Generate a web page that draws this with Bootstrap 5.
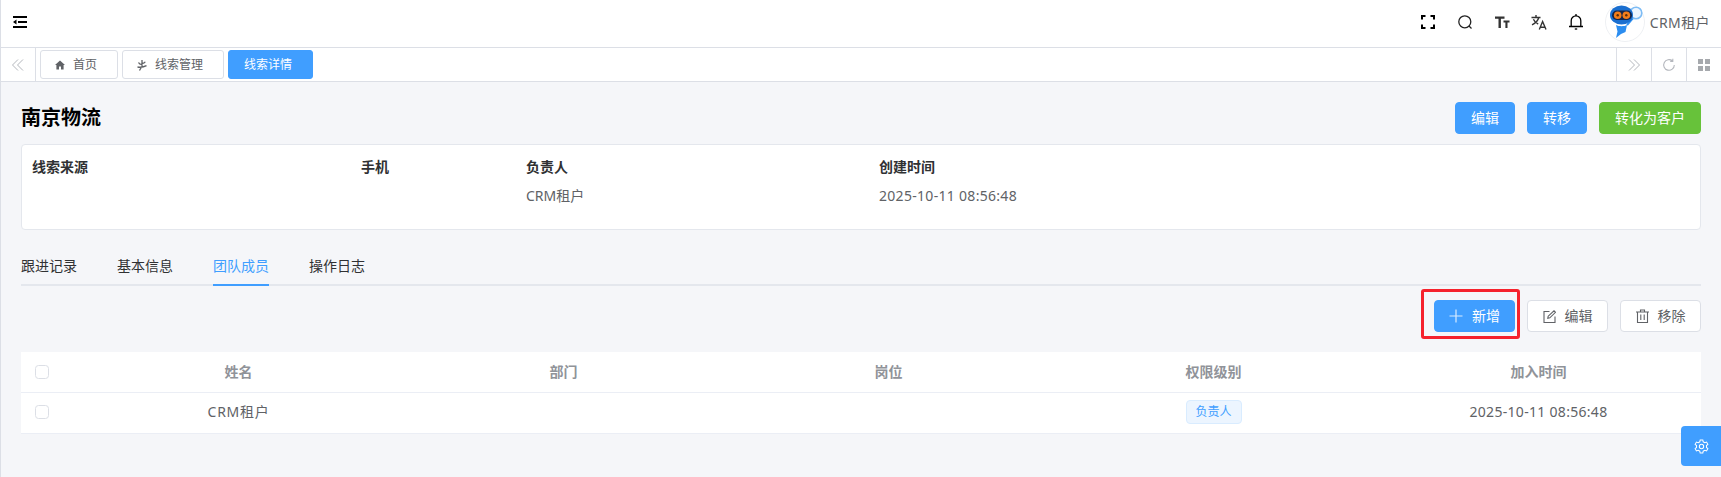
<!DOCTYPE html>
<html lang="zh-CN">
  <head>
    <meta charset="UTF-8" />
    <meta name="viewport" content="width=device-width, initial-scale=1.0" />
    <title>线索详情</title>
    <link
      href="https://cdn.jsdelivr.net/npm/bootstrap@5.3.0/dist/css/bootstrap.min.css"
      rel="stylesheet"
    />
    <style>
      body {
        font-family: "Noto Sans", "Noto Sans CJK SC", sans-serif;
        font-size: 14px;
        color: #303133;
        background-color: #f5f6f9;
        border-left: 1px solid #dcdfe6;
        height: 477px;
        overflow: hidden;
        position: relative;
      }
      .top-bar {
        height: 48px;
        background-color: #fff;
        border-bottom: 1px solid #dcdfe6;
        padding: 0 11px 3px 12px;
      }
      .top-icon {
        width: 18px;
        height: 18px;
        display: block;
      }
      .top-icons {
        gap: 19px;
        margin-right: 20px;
      }
      .robot-img {
        width: 40px;
        height: 40px;
        display: block;
      }
      .user-name {
        color: #606266;
        margin-left: 5px;
        letter-spacing: 0.4px;
      }
      .tab-strip {
        height: 34px;
        background-color: #fff;
        border-bottom: 1px solid #dcdfe6;
      }
      .strip-side {
        width: 35px;
        height: 33px;
        border-right: 1px solid #dcdfe6;
      }
      .strip-right {
        border-right: 0;
        border-left: 1px solid #dcdfe6;
      }
      .page-tabs {
        gap: 4px;
        margin-left: 4px;
      }
      .page-tab {
        height: 29px;
        padding: 0 20px 0 14px;
        gap: 8px;
        font-size: 12px;
        color: #606266;
        background-color: #fff;
        border: 1px solid #dcdfe6;
        border-radius: 3px;
      }
      .page-tab-on {
        padding-left: 15px;
        background-color: #409eff;
        border-color: #409eff;
        color: #fff;
      }
      .main-area {
        padding: 20px 20px 0;
      }
      .lead-title {
        font-size: 20px;
        font-weight: 700;
        color: #000;
        margin: 0;
      }
      .act-btn {
        height: 32px;
        padding: 0;
        font-size: 14px;
        border-radius: 4px;
        line-height: 1;
      }
      .act-60 {
        width: 60px;
      }
      .act-102 {
        width: 102px;
      }
      .act-81 {
        width: 81px;
        gap: 9px;
      }
      .act-blue,
      .act-blue:hover {
        background-color: #409eff;
        border-color: #409eff;
        color: #fff;
      }
      .act-green,
      .act-green:hover {
        background-color: #67c23a;
        border-color: #67c23a;
        color: #fff;
      }
      .act-plain,
      .act-plain:hover {
        background-color: #fff;
        border-color: #dcdfe6;
        color: #606266;
      }
      .title-row {
        gap: 12px;
        margin-bottom: 10px;
      }
      .info-box {
        height: 86px;
        background-color: #fff;
        border: 1px solid #e4e7ed;
        border-radius: 4px;
        padding: 12px 10px 0;
        display: grid;
        grid-template-columns: 329px 165px 353px 1fr;
        grid-template-rows: 20px 20px;
        row-gap: 9px;
        line-height: 20px;
      }
      .info-label {
        font-weight: 700;
      }
      .info-value {
        color: #606266;
      }
      .detail-tabs {
        margin-top: 16px;
        gap: 40px;
        border-bottom: 2px solid #e4e7ed;
        height: 40px;
      }
      .detail-tabs .nav-link {
        padding: 10px 0 0;
        height: 40px;
        line-height: 20px;
        color: #303133;
        border-bottom: 2px solid transparent;
      }
      .detail-tabs .nav-link.active {
        color: #409eff;
        border-bottom-color: #409eff;
      }
      .tool-row {
        margin-top: 14px;
        gap: 12px;
      }
      .red-mark {
        position: absolute;
        top: -11px;
        bottom: -7px;
        left: -13px;
        right: -5px;
        border: 3px solid #f5222d;
        border-radius: 3px;
        pointer-events: none;
      }
      .member-table {
        margin: 20px 0 0;
        table-layout: fixed;
        background-color: #fff;
      }
      .member-table th,
      .member-table td {
        padding: 0;
        text-align: center;
        vertical-align: middle;
        border-bottom: 1px solid #ebeef5;
        line-height: 20px;
      }
      .member-table th {
        height: 40px;
        color: #909399;
        font-weight: 700;
      }
      .member-table td {
        height: 41px;
        padding-bottom: 1px;
        color: #606266;
      }
      .check-col {
        width: 55px;
      }
      .member-table .check-col {
        padding-left: 14px;
        text-align: left;
      }
      .row-check {
        width: 14px;
        height: 14px;
        margin: 0;
        border: 1px solid #dcdfe6;
        border-radius: 2px;
        display: block;
      }
      .role-tag {
        display: inline-block;
        width: 56px;
        height: 24px;
        line-height: 22px;
        font-size: 12px;
        color: #409eff;
        background-color: #ecf5ff;
        border: 1px solid #d9ecff;
        border-radius: 4px;
      }
      .date-text {
        letter-spacing: 0.3px;
      }
      .member-table .name-text {
        letter-spacing: 0.7px;
      }
      .settings-btn {
        position: absolute;
        right: 0;
        top: 426px;
        width: 40px;
        height: 40px;
        background-color: #409eff;
        border-radius: 4px 0 0 4px;
      }
    </style>
  </head>
  <body>
    <header class="top-bar d-flex align-items-center justify-content-between">
      <svg width="14" height="12" viewBox="0 0 14 12" class="d-block">
        <path d="M0 1h14M5 6h9M0 11h14" stroke="#000" stroke-width="2" fill="none" />
        <path d="M0 6l3.500-2.400v4.800z" fill="#000" />
      </svg>
      <div class="d-flex align-items-center">
        <div class="top-icons d-flex align-items-center">
          <svg class="top-icon" viewBox="0 0 18 18" fill="none" stroke="#000" stroke-width="2">
            <path d="M3 6.500V3h3.500M11.500 3H15v3.500M15 11.500V15h-3.500M6.500 15H3v-3.500" />
          </svg>
          <svg class="top-icon" viewBox="0 0 18 18" fill="none" stroke="#222" stroke-width="1.300">
            <circle cx="8.800" cy="8.800" r="6" />
            <path d="M13 13l2.500 2.500" />
          </svg>
          <svg class="top-icon" viewBox="0 0 18 18" fill="#333">
            <path d="M2 3.500h9.500v2.200H7.900V15H5.500V5.700H2zM10.500 7.500H16.500v1.900h-2V15h-2.100V9.400h-1.900z" />
          </svg>
          <svg class="top-icon" viewBox="0 0 18 18" fill="none" stroke="#333" stroke-width="1.400">
            <path d="M1.500 4.500h9M6 2v2.500M8.800 4.500C8 7.500 5.500 10.200 2 11.800M3.400 6.300C4.400 8.600 6 10 8.200 11" />
            <path d="M9.300 16.500l3.300-8 3.400 8M10.500 14.200h4.300" />
          </svg>
          <svg class="top-icon" viewBox="0 0 18 18" fill="none" stroke="#000" stroke-width="1.300">
            <path d="M2 13.500h14M4.200 13.500V7.700a4.800 4.800 0 0 1 9.600 0v5.800" />
            <path d="M9 1v2" />
            <path d="M7.800 16h2.400" />
          </svg>
        </div>
        <svg class="robot-img" viewBox="0 0 40 40">
          <circle cx="20" cy="20" r="19.500" fill="#fff" stroke="#eef0f3" />
          <path d="M22 23l6-7" stroke="#2d8ff0" stroke-width="2" />
          <circle cx="31" cy="11" r="5.800" fill="#eef6ff" stroke="#7dbcf5" stroke-width="1.600" />
          <ellipse cx="16.500" cy="13" rx="11.500" ry="9.500" fill="#1a6fd0" />
          <rect x="7" y="8.500" width="20" height="9.500" rx="4.700" fill="#14264c" />
          <circle cx="12.700" cy="13.200" r="3.800" fill="#f37d1a" />
          <circle cx="21.300" cy="13.200" r="3.800" fill="#f37d1a" />
          <circle cx="12.700" cy="13.200" r="1.200" fill="#5b2c08" />
          <circle cx="21.300" cy="13.200" r="1.200" fill="#5b2c08" />
          <path d="M11 23c3 1.600 8 1.600 11 0l-1.500 7-4.500 2-5 4 1.500-6.500z" fill="#2b8df0" />
        </svg>
        <span class="user-name">CRM租户</span>
      </div>
    </header>

    <div class="tab-strip d-flex align-items-center">
      <div class="strip-side d-flex align-items-center justify-content-center">
        <svg width="14" height="14" viewBox="0 0 14 14" fill="none" stroke="#b4b7bd" stroke-width="1">
          <path d="M7 1.500L1.500 7 7 12.500M12 1.500L6.500 7 12 12.500" />
        </svg>
      </div>
      <div class="page-tabs d-flex align-items-center">
        <a class="page-tab d-flex align-items-center text-decoration-none" href="#">
          <svg width="10" height="10" viewBox="0 0 10 10" fill="#606266">
            <path d="M5 .5L10 5H8.600v4.500H6V6.500H4v3H1.400V5H0z" />
          </svg>
          首页
        </a>
        <a class="page-tab d-flex align-items-center text-decoration-none" href="#">
          <svg width="10" height="12" viewBox="0 0 10 12" fill="none" stroke="#606266" stroke-width="1.300">
            <path d="M5 1v6.500M5 5.500C3.500 5.500 2 4.800 1.500 3.500M5 4.500c1.500 0 2.700-.6 3.300-1.800M.5 8c3 .5 6.500 0 9-1.300M4.500 8L2.500 11.500" />
          </svg>
          线索管理
        </a>
        <a class="page-tab page-tab-on d-flex align-items-center text-decoration-none" href="#">线索详情</a>
      </div>
      <div class="strip-side strip-right ms-auto d-flex align-items-center justify-content-center">
        <svg width="14" height="14" viewBox="0 0 14 14" fill="none" stroke="#b4b7bd" stroke-width="1">
          <path d="M2 1.500L7.500 7 2 12.500M7 1.500L12.500 7 7 12.500" />
        </svg>
      </div>
      <div class="strip-side strip-right d-flex align-items-center justify-content-center">
        <svg width="14" height="14" viewBox="0 0 14 14" fill="none" stroke="#b4b7bd" stroke-width="1.100">
          <path d="M12.300 7A5.300 5.300 0 1 1 10.500 3M10.800 .8V3.400H8.200" />
        </svg>
      </div>
      <div class="strip-side strip-right d-flex align-items-center justify-content-center">
        <svg width="12" height="12" viewBox="0 0 12 12" fill="#a6a9ad">
          <rect width="5" height="5" />
          <rect x="7" width="5" height="5" />
          <rect y="7" width="5" height="5" />
          <rect x="7" y="7" width="5" height="5" />
        </svg>
      </div>
    </div>

    <main class="main-area">
      <div class="title-row d-flex align-items-center">
        <h1 class="lead-title me-auto">南京物流</h1>
        <button type="button" class="btn act-btn act-60 act-blue">编辑</button>
        <button type="button" class="btn act-btn act-60 act-blue">转移</button>
        <button type="button" class="btn act-btn act-102 act-green">转化为客户</button>
      </div>

      <section class="info-box">
        <div class="info-label">线索来源</div>
        <div class="info-label">手机</div>
        <div class="info-label">负责人</div>
        <div class="info-label">创建时间</div>
        <div class="info-value"></div>
        <div class="info-value"></div>
        <div class="info-value">CRM租户</div>
        <div class="info-value date-text">2025-10-11 08:56:48</div>
      </section>

      <ul class="nav detail-tabs">
        <li class="nav-item"><a class="nav-link" href="#">跟进记录</a></li>
        <li class="nav-item"><a class="nav-link" href="#">基本信息</a></li>
        <li class="nav-item"><a class="nav-link active" href="#">团队成员</a></li>
        <li class="nav-item"><a class="nav-link" href="#">操作日志</a></li>
      </ul>

      <div class="tool-row d-flex justify-content-end">
        <div class="position-relative">
          <button type="button" class="btn act-btn act-81 act-blue d-flex align-items-center justify-content-center">
            <svg width="14" height="14" viewBox="0 0 14 14" stroke="#fff" stroke-width="1.200" opacity="0.8">
              <path d="M7 .5v13M.5 7h13" />
            </svg>
            新增
          </button>
          <span class="red-mark"></span>
        </div>
        <button type="button" class="btn act-btn act-81 act-plain d-flex align-items-center justify-content-center">
          <svg width="13" height="13" viewBox="0 0 13 13" fill="none" stroke="#606266" stroke-width="1.100">
            <path d="M6.500 1.500H1v11h11V6.500" />
            <path d="M4.800 8.200l.4-2L11 .8l1.500 1.500-5.700 5.500z" />
          </svg>
          编辑
        </button>
        <button type="button" class="btn act-btn act-81 act-plain d-flex align-items-center justify-content-center">
          <svg width="13" height="14" viewBox="0 0 13 14" fill="none" stroke="#606266" stroke-width="1.100">
            <path d="M0 3h13M4.500 3V1h4v2M1.500 3v10.500h10V3M4.800 5.500v5.500M8.200 5.500v5.500" />
          </svg>
          移除
        </button>
      </div>

      <table class="table member-table">
        <thead>
          <tr>
            <th class="check-col"><input class="form-check-input row-check" type="checkbox" aria-label="全选" /></th>
            <th>姓名</th>
            <th>部门</th>
            <th>岗位</th>
            <th>权限级别</th>
            <th>加入时间</th>
          </tr>
        </thead>
        <tbody>
          <tr>
            <td class="check-col"><input class="form-check-input row-check" type="checkbox" aria-label="选择" /></td>
            <td class="name-text">CRM租户</td>
            <td></td>
            <td></td>
            <td><span class="role-tag">负责人</span></td>
            <td class="date-text">2025-10-11 08:56:48</td>
          </tr>
        </tbody>
      </table>
    </main>

    <div class="settings-btn d-flex align-items-center justify-content-center">
      <svg width="15" height="15" viewBox="0 0 16 16" fill="none" stroke="#fff" stroke-width="1.100">
        <path d="M6.600 1h2.800l.4 2 1.700 1 1.900-.7 1.400 2.400-1.500 1.300v2l1.500 1.300-1.400 2.400-1.900-.7-1.700 1-.4 2H6.600l-.4-2-1.700-1-1.900.7-1.400-2.400L2.700 9V7L1.200 5.700l1.400-2.400 1.900.7 1.700-1z" />
        <circle cx="8" cy="8" r="2.300" />
      </svg>
    </div>

    <script src="https://cdn.jsdelivr.net/npm/bootstrap@5.3.0/dist/js/bootstrap.bundle.min.js"></script>
  </body>
</html>
